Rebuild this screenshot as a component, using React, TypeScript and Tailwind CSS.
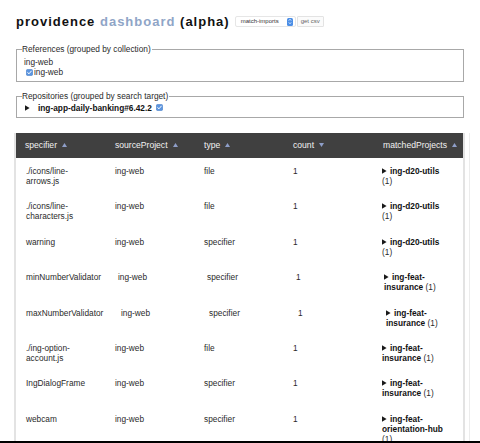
import React from "react";

const Check = () => (
  <svg width="7" height="7" viewBox="0 0 7 7" className="inline-block shrink-0">
    <rect x="0.4" y="0.4" width="6.2" height="6.2" rx="1.3" fill="#5b95e0" stroke="#3f78c6" strokeWidth="0.6" />
    <path d="M1.7 3.6 L3 4.8 L5.3 2.1" stroke="white" strokeWidth="1" fill="none" strokeLinecap="round" strokeLinejoin="round" />
  </svg>
);

const Tri = () => (
  <svg width="5" height="6" viewBox="0 0 5 6" className="inline-block shrink-0">
    <polygon points="0,0.3 4.6,3 0,5.7" fill="#1a1a1a" />
  </svg>
);

const Up = () => (
  <svg width="5" height="4" viewBox="0 0 5 4" className="inline-block ml-[5px]">
    <polygon points="2.5,0 5,4 0,4" fill="#8e9ec8" />
  </svg>
);
const Down = () => (
  <svg width="5" height="4" viewBox="0 0 5 4" className="inline-block ml-[5px]">
    <polygon points="0,0 5,0 2.5,4" fill="#8e9ec8" />
  </svg>
);

type Row = {
  spec: React.ReactNode;
  type: string;
  match: React.ReactNode;
  w: [string, string, string, string];
};

const utils = (
  <>
    <span className="inline-flex items-center gap-[3px]">
      <Tri />
      <b className="font-bold text-[#111]">ing-d20-utils</b>
    </span>
    <br />
    (1)
  </>
);
const insurance = (
  <>
    <span className="inline-flex items-center gap-[3px]">
      <Tri />
      <b className="font-bold text-[#111]">ing-feat-</b>
    </span>
    <br />
    <b className="font-bold text-[#111]">insurance</b> (1)
  </>
);
const hub = (
  <>
    <span className="inline-flex items-center gap-[3px]">
      <Tri />
      <b className="font-bold text-[#111]">ing-feat-</b>
    </span>
    <br />
    <b className="font-bold text-[#111]">orientation-hub</b>
    <br />
    (1)
  </>
);

const D: [string, string, string, string] = ["w-[89px]", "w-[89px]", "w-[89px]", "w-[89px]"];

const rows: Row[] = [
  { spec: <>./icons/line-<br />arrows.js</>, type: "file", match: utils, w: D },
  { spec: <>./icons/line-<br />characters.js</>, type: "file", match: utils, w: D },
  { spec: "warning", type: "specifier", match: utils, w: D },
  { spec: "minNumberValidator", type: "specifier", match: insurance, w: ["w-[92px]", "w-[89px]", "w-[89px]", "w-[88px]"] },
  { spec: "maxNumberValidator", type: "specifier", match: insurance, w: ["w-[95px]", "w-[88px]", "w-[89px]", "w-[88px]"] },
  { spec: <>./ing-option-<br />account.js</>, type: "file", match: insurance, w: D },
  { spec: "IngDialogFrame", type: "specifier", match: insurance, w: D },
  { spec: "webcam", type: "specifier", match: hub, w: D },
];

export default function App() {
  return (
    <div className="w-[480px] h-[443px] flex flex-col bg-white overflow-hidden font-['Liberation_Sans',Arial,sans-serif] text-[#2a2a2a]">
      <div className="flex-1 min-h-0 flex flex-col px-[16px]">
        <div className="pt-[14px] flex items-center">
          <h1 className="text-[13px] leading-[15px] font-bold tracking-[1px] text-[#111]">
            providence <span className="text-[#8fa5c7]">dashboard</span> (alpha)
          </h1>
          <div className="ml-[5px] h-[11px] w-[61px] flex items-center justify-between border border-[#e6e6e6] rounded-[2px] bg-white pl-[5px] pr-[2px] text-[6px] text-[#333]">
            <span>match-imports</span>
            <span className="w-[6px] h-[8px] rounded-[1.5px] bg-[#4b8ee6] flex flex-col items-center justify-center gap-[1px]">
              <svg width="4" height="2" viewBox="0 0 4 2"><path d="M0.5 1.7 L2 0.3 L3.5 1.7" stroke="white" strokeWidth="0.7" fill="none" /></svg>
              <svg width="4" height="2" viewBox="0 0 4 2"><path d="M0.5 0.3 L2 1.7 L3.5 0.3" stroke="white" strokeWidth="0.7" fill="none" /></svg>
            </span>
          </div>
          <div className="ml-[1px] h-[11px] w-[27px] flex items-center justify-center border border-[#e3e3e3] rounded-[1px] bg-[#fbfbfb] text-[6px] text-[#666]">
            get csv
          </div>
        </div>

        <fieldset className="mt-[15px] border border-[#a8a8a8] pl-[5px] pr-[6px] pb-[4px] text-[8.3px] leading-[10px]">
          <legend className="pr-[1px]">References (grouped by collection)</legend>
          <div className="pl-[2px] mt-[3px]">ing-web</div>
          <div className="pl-[4px] flex items-center gap-[1px] h-[10px]">
            <Check />
            <span>ing-web</span>
          </div>
        </fieldset>

        <fieldset className="mt-[9px] border border-[#a8a8a8] pl-[5px] pr-[6px] pb-[4px] text-[8.3px] leading-[10px]">
          <legend className="pr-[1px]">Repositories (grouped by search target)</legend>
          <div className="pl-[3px] mt-[1px] flex items-center h-[11px]">
            <Tri />
            <b className="ml-[8px] font-bold text-[#111]">ing-app-daily-banking#6.42.2</b>
            <span className="ml-[4px] flex"><Check /></span>
          </div>
        </fieldset>

        <div className="mt-[15px] flex-1 min-h-0 flex -ml-[2px]">
          <div className="w-[451px] shrink-0 border-x-2 border-[#e3e3e3] flex flex-col overflow-hidden">
            <div className="h-[25px] shrink-0 flex items-center bg-[#404040] text-[#f2f2f2] text-[8.6px]">
              <div className="w-[90px] shrink-0 pl-[9px] flex items-center">specifier<Up /></div>
              <div className="w-[89px] shrink-0 pl-[9px] flex items-center">sourceProject<Up /></div>
              <div className="w-[89px] shrink-0 pl-[9px] flex items-center">type<Up /></div>
              <div className="w-[90px] shrink-0 pl-[9px] flex items-center">count<Down /></div>
              <div className="flex-1 pl-[9px] flex items-center">matchedProjects<Up /></div>
            </div>
            {rows.map((r, i) => (
              <div key={i} className="h-[35.4px] shrink-0 flex text-[8.3px] leading-[10px] pt-[8px]">
                <div className={`${r.w[0]} shrink-0 pl-[10px]`}>{r.spec}</div>
                <div className={`${r.w[1]} shrink-0 pl-[10px]`}>ing-web</div>
                <div className={`${r.w[2]} shrink-0 pl-[10px]`}>{r.type}</div>
                <div className={`${r.w[3]} shrink-0 pl-[10px]`}>1</div>
                <div className="flex-1 pl-[10px]">{r.match}</div>
              </div>
            ))}
          </div>
          <div className="ml-[4px] w-px shrink-0 bg-[#ececec]" />
        </div>
      </div>
      <div className="h-[2px] shrink-0 bg-black" />
    </div>
  );
}
